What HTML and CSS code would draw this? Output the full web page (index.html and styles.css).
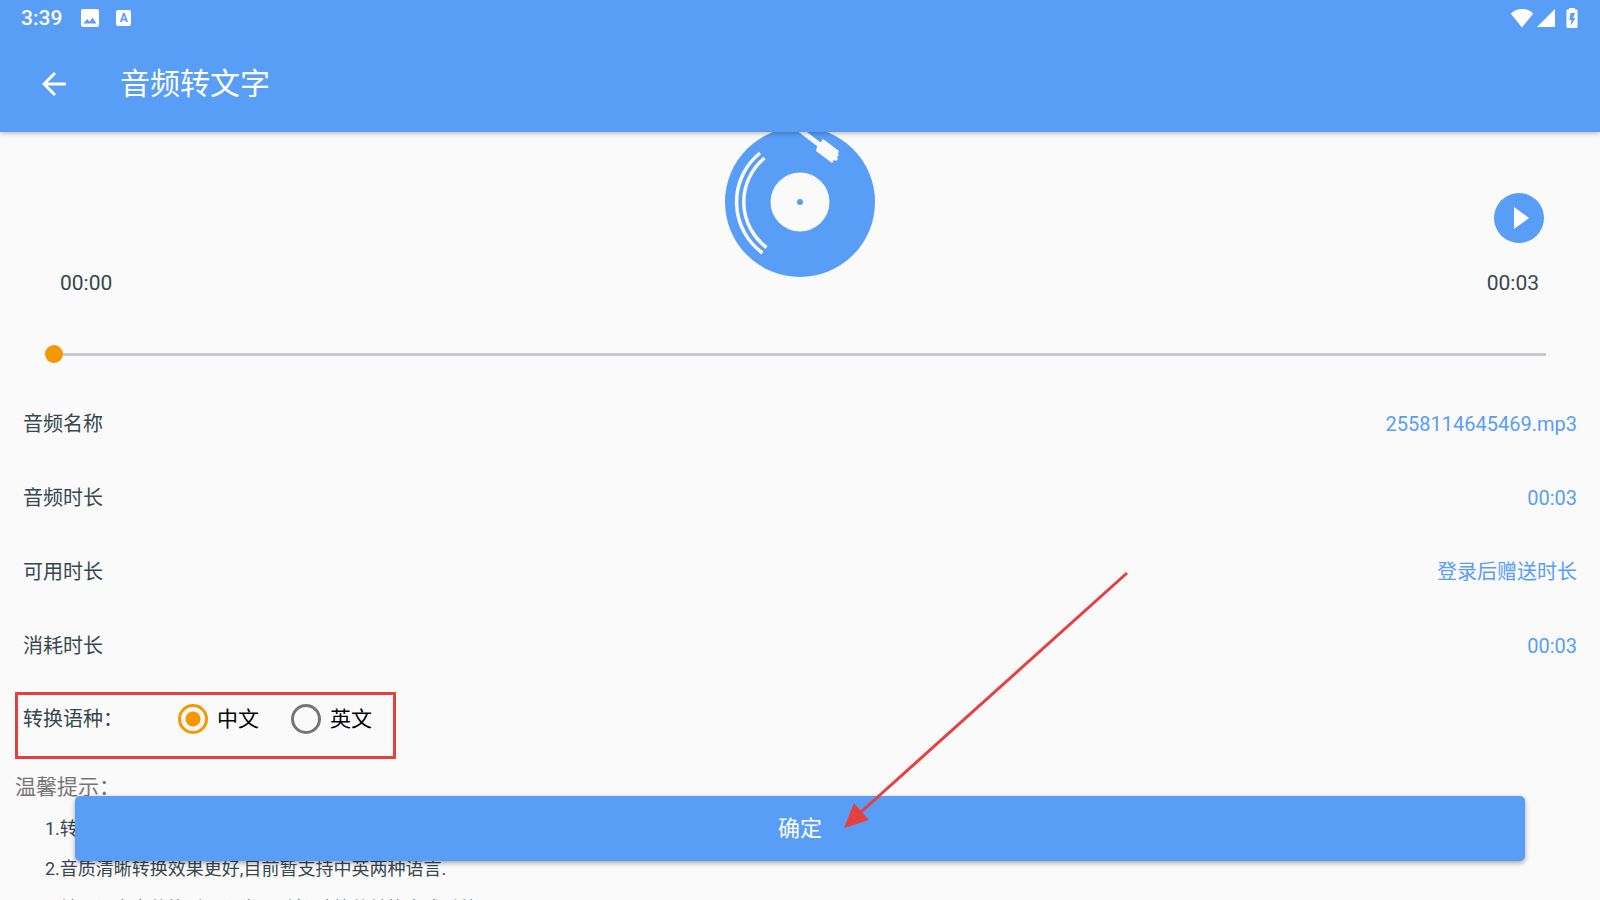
FILE: index.html
```html
<!DOCTYPE html>
<html lang="zh-CN">
<head>
    <meta charset="UTF-8">
    <title>音频转文字</title>
    <link rel="stylesheet" href="styles.css">
</head>
<body>
    <header class="app-header">
        <div class="status-bar">
            <span class="clock">3:39</span>
            <svg class="status-icon icon-image" width="18" height="18" viewBox="0 0 18 18">
                <path fill="#fff" fill-rule="evenodd" d="M2 0h14a2 2 0 0 1 2 2v14a2 2 0 0 1-2 2H2a2 2 0 0 1-2-2V2a2 2 0 0 1 2-2zM2.500 14.500h13L11.500 8.800 8.500 12.700 6.200 10z"/>
            </svg>
            <span class="status-icon icon-lang">A</span>
            <div class="status-right">
                <svg width="24" height="20" viewBox="0 0 24 20">
                    <path fill="#fff" d="M12 19.500.8 5.800C3.500 2.600 7.500 1 12 1s8.500 1.600 11.200 4.800z"/>
                </svg>
                <svg width="18" height="20" viewBox="0 0 18 20">
                    <path fill="#fff" d="M18 1v18H0z"/>
                </svg>
                <svg class="battery" width="12" height="20" viewBox="0 0 12 20">
                    <path fill="#fff" fill-rule="evenodd" d="M3 0h6v1.500h1.500a1 1 0 0 1 1 1V19a1 1 0 0 1-1 1h-9a1 1 0 0 1-1-1V2.500a1 1 0 0 1 1-1H3zM4.500 5 3.500 12h2L4.500 18 9.500 10H7L9 5z"/>
                </svg>
            </div>
        </div>
        <div class="toolbar">
            <button class="back-button" aria-label="返回">
                <svg width="24" height="24" viewBox="0 0 24 24">
                    <path fill="none" stroke="#fff" stroke-width="3" d="M24 12H2M13 1 2 12l11 11"/>
                </svg>
            </button>
            <h1 class="title">音频转文字</h1>
        </div>
    </header>

    <main class="content">
        <section class="player">
            <svg class="disc" width="150" height="150" viewBox="0 0 150 150">
                <circle cx="75" cy="75" r="75" fill="#589df6"/>
                <circle cx="75" cy="75" r="29.500" fill="#fafafa"/>
                <circle cx="75" cy="75" r="3" fill="#589df6"/>
                <g fill="none" stroke="#fafafa" stroke-width="3.500">
                    <path d="M35 26A63 63 0 0 0 37.500 126"/>
                    <path d="M39.500 31A57 57 0 0 0 41.500 120.500"/>
                </g>
                <path stroke="#fafafa" stroke-width="5" d="M70-1 96 19"/>
                <path fill="#fafafa" d="m98 12 16 12-1 3 1 1-2 2 1 2-2 2-2-1-2 3-16-12 1-4z"/>
            </svg>
            <button class="play-button" aria-label="播放">
                <svg width="50" height="50" viewBox="0 0 50 50">
                    <path fill="#fff" d="M20 14v22l15-11z"/>
                </svg>
            </button>
            <span class="time time-current">00:00</span>
            <span class="time time-total">00:03</span>
        </section>
        <input class="seek" type="range" min="0" max="3" value="0" aria-label="播放进度">

        <dl class="info">
            <div class="row"><dt>音频名称</dt><dd>2558114645469.mp3</dd></div>
            <div class="row"><dt>音频时长</dt><dd>00:03</dd></div>
            <div class="row"><dt>可用时长</dt><dd>登录后赠送时长</dd></div>
            <div class="row"><dt>消耗时长</dt><dd>00:03</dd></div>
        </dl>

        <div class="row language" role="radiogroup" aria-labelledby="language-label">
            <span class="language-label" id="language-label">转换语种：</span>
            <label class="option"><input type="radio" name="language" value="zh" checked>中文</label>
            <label class="option"><input type="radio" name="language" value="en">英文</label>
            <div class="highlight"></div>
        </div>

        <section class="tips">
            <h2 class="tips-title">温馨提示：</h2>
            <p>1.转换时长以音频的实际时长为准.</p>
            <p>2.音质清晰转换效果更好,目前暂支持中英两种语言.</p>
            <p>3.转写语音文件换时间与类似时长,请等待转换完成系统</p>
        </section>
    </main>

    <button class="confirm-button">确定</button>

    <svg class="arrow" width="290" height="260" viewBox="0 0 290 260">
        <path stroke="#e53f40" stroke-width="3" d="M284 3 18 242"/>
        <path fill="#e53f40" d="M1 258 11 233 26 250z"/>
    </svg>
</body>
</html>
```

FILE: styles.css
```css
* {
    box-sizing: border-box;
}

body {
    display: flex;
    flex-direction: column;
    height: 100vh;
    margin: 0;
    overflow: hidden;
    position: relative;
    background: #fafafa;
    color: #37474f;
    font-family: Roboto, "Noto Sans CJK SC", sans-serif;
    font-size: 20px;
    line-height: 24px;
}

button {
    padding: 0;
    border: none;
    background: none;
    color: #fff;
    font-family: inherit;
    cursor: pointer;
}

svg {
    display: block;
}

h1, h2, p, dl, dd {
    margin: 0;
    font-weight: 400;
}

/* Header */
.app-header {
    flex: none;
    position: relative;
    z-index: 1;
    background: #589df6;
    color: #fff;
    box-shadow: 0 1px 5px rgba(0, 0, 0, 0.3);
}

.status-bar {
    display: flex;
    align-items: center;
    height: 36px;
    padding: 0 22px 0 21px;
}

.clock {
    font-size: 21px;
    font-weight: 500;
    line-height: 26px;
}

.icon-image {
    margin: 0 17px 0 19px;
}

.icon-lang {
    width: 15px;
    height: 16px;
    border-radius: 2px;
    background: #fff;
    color: #589df6;
    font-size: 12px;
    font-weight: 700;
    line-height: 16px;
    text-align: center;
}

.status-right {
    display: flex;
    align-items: center;
    gap: 3px;
    margin-left: auto;
}

.battery {
    margin-left: 8px;
}

.toolbar {
    display: flex;
    align-items: center;
    gap: 54px;
    height: 96px;
    padding: 0 42px;
}

.title {
    font-size: 30px;
    line-height: 36px;
}

/* Player */
.content {
    flex: 1;
    min-height: 0;
}

.player {
    display: grid;
    grid-template-columns: 1fr auto 1fr;
    grid-template-rows: 144px 24px;
    margin-top: -5px;
    padding: 0 61px 0 60px;
}

.disc {
    grid-column: 2;
    grid-row: 1 / 3;
}

.play-button {
    grid-column: 3;
    grid-row: 1;
    justify-self: end;
    align-self: end;
    width: 50px;
    height: 50px;
    margin: 0 -5px 28px 0;
    border-radius: 50%;
    background: #589df6;
}

.time {
    grid-row: 2;
    font-size: 21px;
}

.time-current {
    grid-column: 1;
}

.time-total {
    grid-column: 3;
    text-align: right;
}

.seek {
    display: block;
    width: calc(100% - 90px);
    height: 18px;
    margin: 50px 45px 24px;
    appearance: none;
    background: linear-gradient(#c6cace, #c6cace) center / calc(100% - 18px) 3px no-repeat;
}

.seek::-webkit-slider-thumb {
    appearance: none;
    width: 18px;
    height: 18px;
    border-radius: 50%;
    background: #f59700;
}

/* Info rows */
.row {
    display: flex;
    align-items: center;
    height: 74px;
    padding: 0 23px;
}

.row dd {
    margin-left: auto;
    color: #589df6;
}

.language {
    position: relative;
    height: 72px;
}

.language-label {
    margin-right: 55px;
}

.option {
    display: flex;
    align-items: center;
    gap: 9px;
    margin-right: 32px;
    color: #000;
    font-size: 21px;
}

.option input {
    appearance: none;
    width: 30px;
    height: 30px;
    margin: 0;
    border: 3px solid #757575;
    border-radius: 50%;
}

.option input:checked {
    border-color: #f59700;
    background: radial-gradient(circle, #f59700 7px, transparent 8px);
}

.highlight {
    position: absolute;
    left: 15px;
    top: 9px;
    width: 381px;
    height: 67px;
    border: 3px solid #e53f40;
}

/* Tips */
.tips {
    padding: 18px 15px 0;
}

.tips-title {
    margin-bottom: 8px;
    color: #757575;
    font-size: 21px;
    line-height: 28px;
}

.tips p {
    padding-left: 30px;
    font-size: 18px;
    line-height: 40px;
    white-space: nowrap;
}

.confirm-button {
    position: absolute;
    right: 75px;
    bottom: 39px;
    left: 75px;
    height: 65px;
    border-radius: 5px;
    background: #589df6;
    font-size: 22px;
    line-height: 24px;
    box-shadow: 0 2px 5px rgba(0, 0, 0, 0.35);
}

.arrow {
    position: absolute;
    left: 843px;
    top: 570px;
    pointer-events: none;
}
```
